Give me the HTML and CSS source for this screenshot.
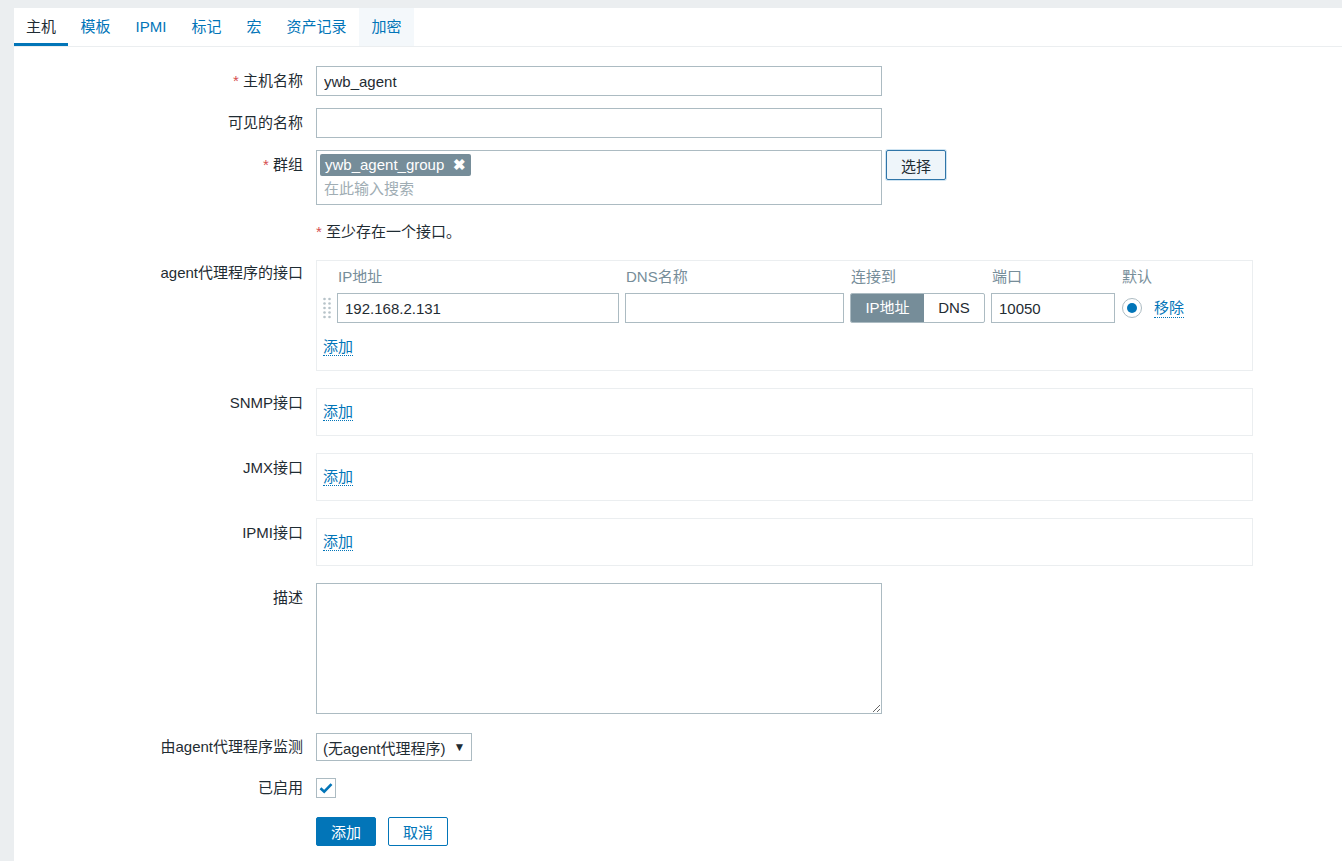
FILE: index.html
```html
<!DOCTYPE html>
<html lang="zh-CN">
<head>
<meta charset="utf-8">
<title>主机</title>
<link rel="stylesheet" href="styles.css">
</head>
<body>
<div class="panel">
  <nav class="tabs">
    <a class="tab active">主机</a>
    <a class="tab">模板</a>
    <a class="tab">IPMI</a>
    <a class="tab">标记</a>
    <a class="tab">宏</a>
    <a class="tab">资产记录</a>
    <a class="tab hover">加密</a>
  </nav>
  <form class="form">
    <div class="row">
      <label class="lbl"><span class="req">*</span> 主机名称</label>
      <div class="field"><input class="text wide" type="text" value="ywb_agent"></div>
    </div>
    <div class="row">
      <label class="lbl">可见的名称</label>
      <div class="field"><input class="text wide" type="text" value=""></div>
    </div>
    <div class="row">
      <label class="lbl"><span class="req">*</span> 群组</label>
      <div class="field inline">
        <div class="multiselect">
          <span class="tag">ywb_agent_group <span class="tag-x">✖</span></span>
          <span class="ms-placeholder">在此输入搜索</span>
        </div>
        <button type="button" class="btn-select">选择</button>
      </div>
    </div>
    <div class="row note-row">
      <span class="lbl"></span>
      <div class="note"><span class="req">*</span> 至少存在一个接口。</div>
    </div>
    <div class="row agent-row">
      <label class="lbl lbl-agent">agent代理程序的接口</label>
      <div class="ifbox">
        <div class="if-grid">
          <span></span>
          <span class="th">IP地址</span>
          <span class="th">DNS名称</span>
          <span class="th">连接到</span>
          <span class="th">端口</span>
          <span class="th">默认</span>
          <span class="handle"><svg width="8" height="22" viewBox="0 0 8 22"><g fill="#b7c3c9"><circle cx="1.5" cy="2" r="1.3"/><circle cx="6.5" cy="2" r="1.3"/><circle cx="1.5" cy="6.5" r="1.3"/><circle cx="6.5" cy="6.5" r="1.3"/><circle cx="1.5" cy="11" r="1.3"/><circle cx="6.5" cy="11" r="1.3"/><circle cx="1.5" cy="15.5" r="1.3"/><circle cx="6.5" cy="15.5" r="1.3"/><circle cx="1.5" cy="20" r="1.3"/><circle cx="6.5" cy="20" r="1.3"/></g></svg></span>
          <input class="text" type="text" value="192.168.2.131">
          <input class="text" type="text" value="">
          <div class="toggle"><span class="tg on">IP地址</span><span class="tg">DNS</span></div>
          <input class="text" type="text" value="10050">
          <div class="default-cell"><span class="radio"><span class="radio-dot"></span></span><a class="link">移除</a></div>
        </div>
        <div class="add-line"><a class="link">添加</a></div>
      </div>
    </div>
    <div class="row box-row">
      <label class="lbl">SNMP接口</label>
      <div class="ifbox small"><a class="link">添加</a></div>
    </div>
    <div class="row box-row">
      <label class="lbl">JMX接口</label>
      <div class="ifbox small"><a class="link">添加</a></div>
    </div>
    <div class="row box-row">
      <label class="lbl">IPMI接口</label>
      <div class="ifbox small"><a class="link">添加</a></div>
    </div>
    <div class="row desc-row">
      <label class="lbl">描述</label>
      <div class="field"><textarea class="textarea"></textarea></div>
    </div>
    <div class="row">
      <label class="lbl lbl-select">由agent代理程序监测</label>
      <div class="field"><span class="select">(无agent代理程序)<span class="caret">▼</span></span></div>
    </div>
    <div class="row enabled-row">
      <label class="lbl">已启用</label>
      <div class="field check-field"><span class="checkbox"><svg width="14" height="12" viewBox="0 0 14 12"><path d="M1.5 6.2 L5.2 9.6 L12.5 2.2" fill="none" stroke="#0275b8" stroke-width="2.6"/></svg></span></div>
    </div>
    <div class="row">
      <span class="lbl"></span>
      <div class="field buttons">
        <button type="button" class="btn-primary">添加</button>
        <button type="button" class="btn-alt">取消</button>
      </div>
    </div>
  </form>
</div>
</body>
</html>
```
FILE: styles.css
```css
* { box-sizing: border-box; }
html, body { margin: 0; padding: 0; }
body {
  background: #ebeef0;
  font-family: "Liberation Sans", "Noto Sans CJK SC", sans-serif;
  font-size: 15px;
  color: #1f2c33;
}
.panel {
  margin: 8px 0 0 14px;
  background: #fff;
  min-height: 853px;
}
.tabs {
  display: flex;
  height: 39px;
  border-bottom: 1px solid #ebeef0;
}
.tab {
  display: block;
  height: 38px;
  line-height: 38px;
  padding: 0 12.5px;
  color: #0275b8;
  cursor: pointer;
}
.tab:first-child { padding: 0 12px; }
.tab.active {
  color: #1f2c33;
  border-bottom: 3px solid #0275b8;
  line-height: 38px;
}
.tab.hover { background: #f4f8fb; }

.form { padding-top: 19px; }
.row {
  display: grid;
  grid-template-columns: 289px 937px;
  column-gap: 13px;
  margin-bottom: 12px;
}
.lbl {
  text-align: right;
  line-height: 30px;
  white-space: nowrap;
}
.req { color: #d64e4e; }
.field { display: flex; align-items: flex-start; }
.field.inline { gap: 4px; }
.text {
  height: 30px;
  border: 1px solid #acbbc2;
  background: #fff;
  font-family: inherit;
  font-size: 15px;
  color: #1f2c33;
  padding: 0 7px;
  margin: 0;
  outline: none;
}
.wide { width: 566px; }

.multiselect {
  width: 566px;
  height: 55px;
  border: 1px solid #acbbc2;
  padding: 3px 3px 0 3px;
  display: flex;
  flex-direction: column;
  align-items: flex-start;
}
.tag {
  display: inline-block;
  height: 22px;
  line-height: 22px;
  background: #768d99;
  color: #fff;
  padding: 0 5px 0 5px;
  border-radius: 2px;
  white-space: nowrap;
}
.tag-x { margin-left: 5px; font-weight: bold; font-size: 15px; }
.ms-placeholder {
  color: #a0adb4;
  line-height: 26px;
  padding-left: 4px;
}
.btn-select {
  width: 60px;
  height: 30px;
  background: #eef5fa;
  border: 1px solid #2f75a8;
  box-shadow: 0 0 0 1px #cfe4f2;
  border-radius: 2px;
  font-family: inherit;
  font-size: 15px;
  color: #1f2c33;
  padding: 0;
  margin: 0;
}

.note-row { margin-bottom: 13px; }
.note { line-height: 30px; }

.agent-row { margin-bottom: 17px; }
.lbl-agent { line-height: 26px; }
.ifbox {
  border: 1px solid #ebeef0;
  width: 937px;
}
.agent-row .ifbox { height: 111px; padding: 4px 6px 0 6px; }
.if-grid {
  display: grid;
  grid-template-columns: 8px 282px 219px 135px 124px auto;
  column-gap: 6px;
  row-gap: 4px;
  grid-template-rows: 24px 30px;
  align-items: center;
}
.th { color: #768d99; line-height: 24px; padding-left: 1px; }
.handle { display: flex; align-items: center; height: 30px; }
.handle svg { display: block; }
.if-grid .text { width: 100%; }
.toggle {
  display: flex;
  height: 30px;
  border: 1px solid #acbbc2;
  border-radius: 2px;
  overflow: hidden;
}
.tg {
  flex: 1;
  text-align: center;
  line-height: 28px;
  color: #1f2c33;
}
.tg.on { background: #768d99; color: #fff; flex: 0 0 73px; }
.default-cell { display: flex; align-items: center; gap: 12px; padding-left: 1px; }
.radio {
  width: 20px;
  height: 20px;
  border: 1px solid #acbbc2;
  border-radius: 50%;
  display: flex;
  align-items: center;
  justify-content: center;
}
.radio-dot { width: 10px; height: 10px; border-radius: 50%; background: #0275b8; }
.link {
  color: #0275b8;
  border-bottom: 1px dotted #0275b8;
  line-height: 18px;
  cursor: pointer;
}
.add-line { padding-top: 14px; line-height: 20px; }

.box-row { margin-bottom: 17px; }
.ifbox.small { height: 48px; padding: 13px 6px 0 6px; line-height: 20px; }

.desc-row { margin-bottom: 19px; }
.textarea {
  width: 566px;
  height: 131px;
  border: 1px solid #acbbc2;
  margin: 0;
  padding: 4px 7px;
  font-family: inherit;
  font-size: 15px;
  display: block;
  outline: none;
}
.lbl-select { line-height: 28px; }
.select {
  display: inline-flex;
  align-items: center;
  height: 28px;
  width: 156px;
  border: 1px solid #acbbc2;
  padding: 0 6px;
  white-space: nowrap;
  color: #1f2c33;
}
.caret { font-size: 12px; margin-left: 8px; }
.enabled-row { margin-bottom: 14px; }
.check-field { align-items: center; height: 30px; }
.checkbox {
  width: 20px;
  height: 20px;
  border: 1px solid #acbbc2;
  display: flex;
  align-items: center;
  justify-content: center;
  background: #fff;
}
.buttons { gap: 12px; }
.btn-primary, .btn-alt {
  width: 60px;
  height: 29px;
  border-radius: 2px;
  font-family: inherit;
  font-size: 15px;
  padding: 0;
  margin: 0;
}
.btn-primary { background: #0275b8; border: 1px solid #0275b8; color: #fff; }
.btn-alt { background: #fff; border: 1px solid #0275b8; color: #0275b8; }
```
